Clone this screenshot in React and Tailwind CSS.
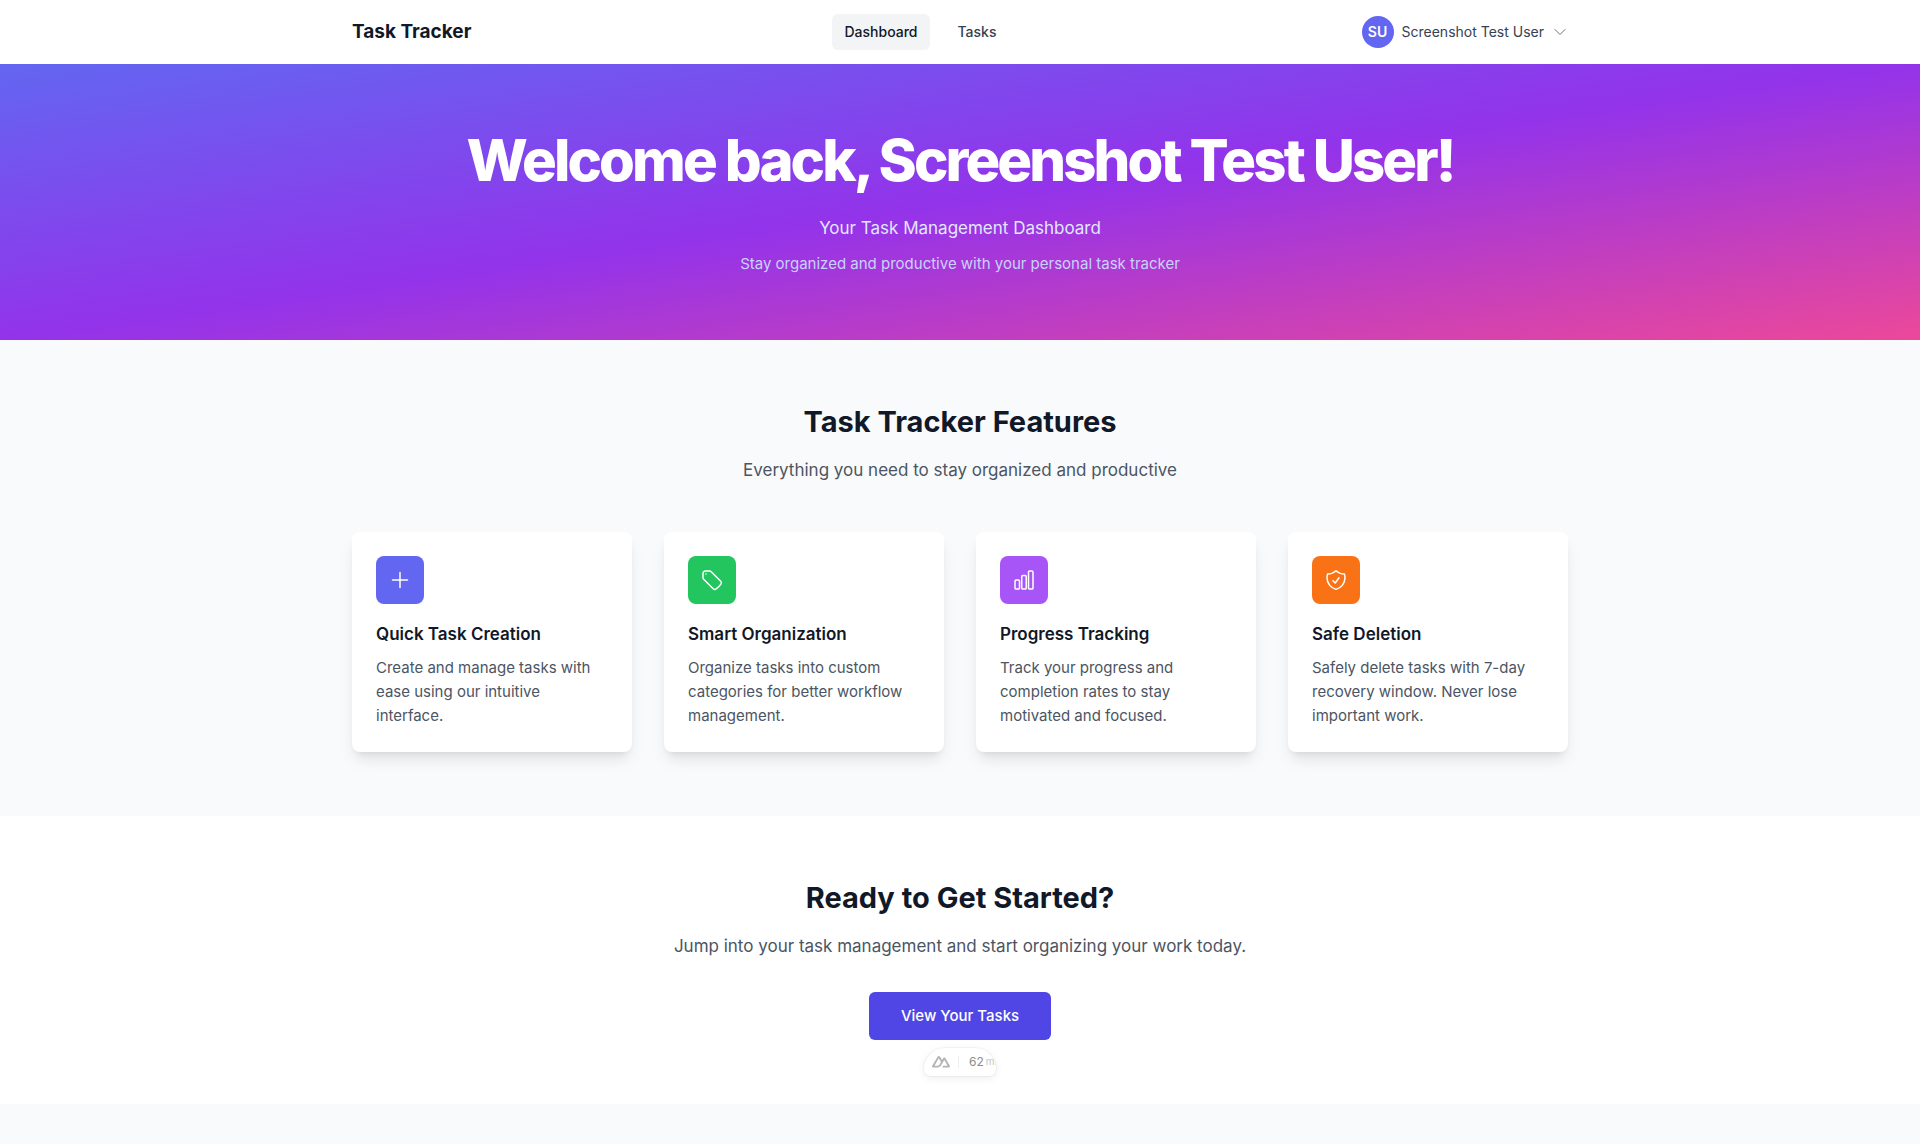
import React from "react";
import {
  HiOutlinePlus,
  HiOutlineTag,
  HiOutlineChartBar,
  HiOutlineShieldCheck,
  HiOutlineChevronDown,
} from "react-icons/hi2";

const features = [
  {
    title: "Quick Task Creation",
    text: "Create and manage tasks with ease using our intuitive interface.",
    tile: "bg-[#6366f1]",
    Icon: HiOutlinePlus,
  },
  {
    title: "Smart Organization",
    text: "Organize tasks into custom categories for better workflow management.",
    tile: "bg-[#22c55e]",
    Icon: HiOutlineTag,
  },
  {
    title: "Progress Tracking",
    text: "Track your progress and completion rates to stay motivated and focused.",
    tile: "bg-[#a855f7]",
    Icon: HiOutlineChartBar,
  },
  {
    title: "Safe Deletion",
    text: "Safely delete tasks with 7-day recovery window. Never lose important work.",
    tile: "bg-[#f97316]",
    Icon: HiOutlineShieldCheck,
  },
];

function Header() {
  return (
    <header className="bg-white">
      <div className="mx-auto flex h-16 max-w-7xl items-center justify-between px-8">
        <a href="#" className="text-[19px]/7 font-bold text-[#111827]">
          Task Tracker
        </a>
        <nav className="flex items-center gap-4 pl-2 text-sm font-medium">
          <a href="#" className="rounded-md bg-[#f3f4f6] px-3 py-2 text-[#111827]">
            Dashboard
          </a>
          <a href="#" className="rounded-md px-3 py-2 text-[#374151]">
            Tasks
          </a>
        </nav>
        <button type="button" className="flex items-center gap-2 text-sm text-[#374151]">
          <span className="flex size-8 items-center justify-center rounded-full bg-[#6366f1] font-semibold text-white">
            SU
          </span>
          <span>Screenshot Test User</span>
          <HiOutlineChevronDown className="size-4 text-[#6b7280]" />
        </button>
      </div>
    </header>
  );
}

function Hero() {
  return (
    <section className="bg-linear-to-br/srgb from-[#6366f1] via-[#9333ea] to-[#ec4899] px-8 py-16 text-center">
      <h1 className="text-[58px]/[64px] font-extrabold tracking-tighter text-white">
        Welcome back, Screenshot Test User!
      </h1>
      <p className="mt-5 text-[17px]/8 text-[#e0e7ff]">Your Task Management Dashboard</p>
      <p className="mt-2 text-[15px]/6 text-[#c7d2fe]">
        Stay organized and productive with your personal task tracker
      </p>
    </section>
  );
}

function FeatureCard({ title, text, tile, Icon }) {
  return (
    <article className="rounded-lg bg-white p-6 shadow-lg">
      <div className={`flex size-12 items-center justify-center rounded-lg text-white ${tile}`}>
        <Icon className="size-6" />
      </div>
      <h3 className="mt-4 text-[17px]/7 font-semibold text-[#111827]">{title}</h3>
      <p className="mt-2 text-[15px]/6 text-[#4b5563]">{text}</p>
    </article>
  );
}

function Features() {
  return (
    <section className="mx-auto max-w-7xl px-8 py-16">
      <div className="text-center">
        <h2 className="text-[29px]/9 font-bold text-[#111827]">Task Tracker Features</h2>
        <p className="mt-4 text-[17px]/7 text-[#4b5563]">
          Everything you need to stay organized and productive
        </p>
      </div>
      <div className="mt-12 grid grid-cols-1 gap-8 md:grid-cols-2 lg:grid-cols-4">
        {features.map((feature) => (
          <FeatureCard key={feature.title} {...feature} />
        ))}
      </div>
    </section>
  );
}

function DevtoolsPill() {
  return (
    <div className="absolute bottom-7 left-1/2 flex h-7 w-18 -translate-x-1/2 items-center overflow-hidden rounded-t-3xl rounded-b-lg bg-white pl-2 text-xs whitespace-nowrap text-[#8c8c8c] shadow-[0_0_0_1px_rgba(0,0,0,0.03),0_2px_8px_rgba(0,0,0,0.08)]">
      <svg viewBox="0 0 324 207" className="w-[18px] shrink-0" fill="#b4b4b4" aria-hidden="true">
        <path d="M181.8 207h120.3c3.8 0 7.6-1 10.9-2.9 3.3-1.9 6-4.6 7.9-7.9s2.9-7 2.9-10.8-1-7.5-2.9-10.8L240.100 36.900c-1.900-3.300-4.600-6-7.900-7.900-3.300-1.900-7.100-2.900-10.900-2.900s-7.500 1-10.800 2.900-6 4.600-7.900 7.900l-20.700 35.300L141.400 10.800c-1.900-3.300-4.700-6-8-7.900C130.100 1 126.400 0 122.600 0s-7.600 1-10.900 2.900-6 4.600-7.900 7.900L3.300 174.600C1.400 177.900.4 181.600.4 185.400s1 7.500 2.900 10.800 4.600 6 7.900 7.900S18.300 207 22.100 207h75.500c29.900 0 52-13 67.100-38.300l36.900-62.900 19.700-33.600 59.300 101.100h-79L181.800 207zM96.300 173.300H43.600l79-134.600 39.400 67.300-26.400 45c-10.100 16.400-21.500 22.300-39.300 22.300z" />
      </svg>
      <span className="mr-2.5 ml-2 h-3 w-px shrink-0 bg-[#efefef]" />
      <span>62</span>
      <span className="ml-0.5 text-[10px] text-[#c4c4c4]">ms</span>
    </div>
  );
}

function CallToAction() {
  return (
    <section className="relative bg-white px-8 py-16 text-center">
      <h2 className="text-[29px]/9 font-bold text-[#111827]">Ready to Get Started?</h2>
      <p className="mt-4 text-[17px]/7 text-[#4b5563]">
        Jump into your task management and start organizing your work today.
      </p>
      <a
        href="#"
        className="mx-auto mt-8 flex w-fit rounded-md bg-[#4f46e5] px-8 py-3 text-[15px]/6 font-medium text-white"
      >
        View Your Tasks
      </a>
      <DevtoolsPill />
    </section>
  );
}

export default function App() {
  return (
    <div className="min-h-screen bg-[#f9fafb] font-['Inter',sans-serif]">
      <Header />
      <main>
        <Hero />
        <Features />
        <CallToAction />
      </main>
    </div>
  );
}
